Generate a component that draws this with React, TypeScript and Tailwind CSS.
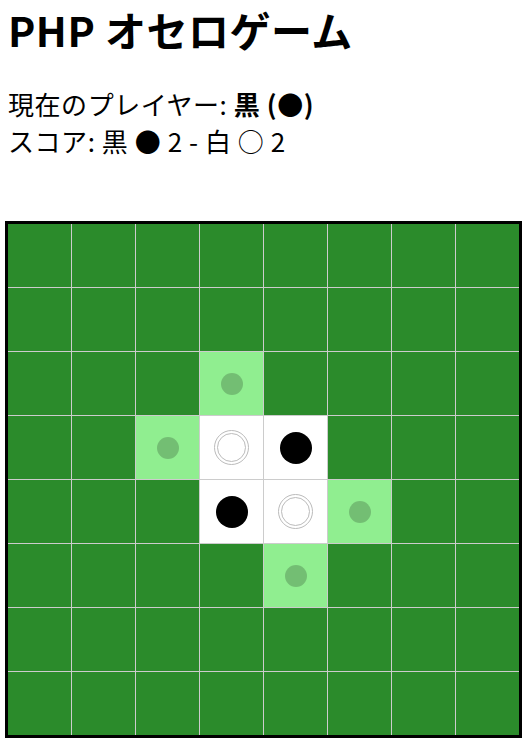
import React from "react";

type Cell = "empty" | "black" | "white" | "hint";

const board: Cell[][] = Array.from({ length: 8 }, () =>
  Array.from({ length: 8 }, () => "empty" as Cell)
);
board[2][3] = "hint";
board[3][2] = "hint";
board[3][3] = "white";
board[3][4] = "black";
board[4][3] = "black";
board[4][4] = "white";
board[4][5] = "hint";
board[5][4] = "hint";

const cellBg = (c: Cell) => {
  if (c === "black" || c === "white") return "bg-white";
  if (c === "hint") return "bg-[#90ee90]";
  return "bg-[#2b8b2b]";
};

const App: React.FC = () => {
  return (
    <div className="font-['Noto_Sans_CJK_JP','Noto_Sans',sans-serif] text-black bg-white min-h-[746px]">
      <h1 className="pl-2 pt-0 text-[41px] font-bold leading-[58px] tracking-[0.5px]">
        PHP オセロゲーム
      </h1>
      <div className="pl-2 mt-[27px] text-[26px] leading-[37px] tracking-[0.55px]">
        <p>
          現在のプレイヤー: <span className="font-bold">黒 (●)</span>
        </p>
        <p>スコア: 黒 ● 2 - 白 ○ 2</p>
      </div>
      <div className="ml-[5px] mt-[62px] w-fit border-[3px] border-black">
        <div className="grid grid-cols-8 gap-px bg-[#cccccc]">
          {board.flatMap((row, r) =>
            row.map((c, i) => (
              <div
                key={`${r}-${i}`}
                className={`w-[63px] h-[63px] flex items-center justify-center ${cellBg(c)}`}
              >
                {c === "black" && (
                  <div className="w-[32px] h-[32px] rounded-full bg-black" />
                )}
                {c === "white" && (
                  <div className="w-[35px] h-[35px] rounded-full bg-white border-[4px] border-double border-[#bbbbbb]" />
                )}
                {c === "hint" && (
                  <div className="w-[22px] h-[22px] rounded-full bg-black/20" />
                )}
              </div>
            ))
          )}
        </div>
      </div>
    </div>
  );
};

export default App;
